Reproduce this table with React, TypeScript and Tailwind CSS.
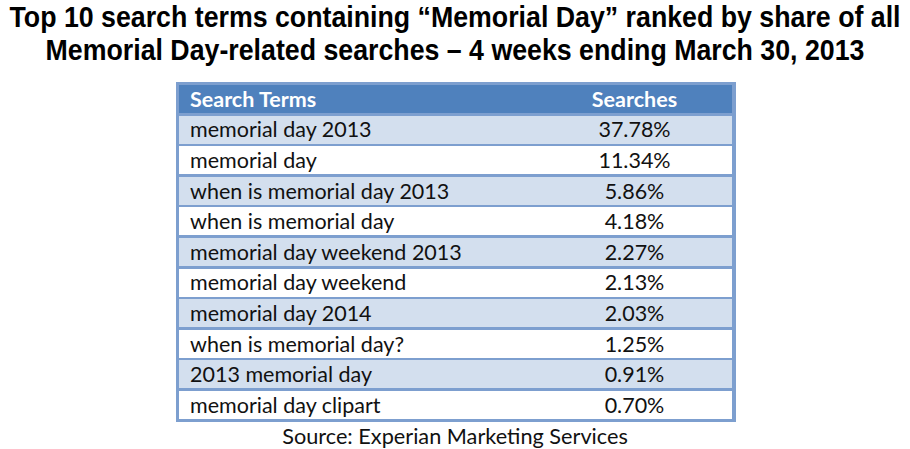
const rows: [string, string][] = [
  ['memorial day 2013', '37.78%'],
  ['memorial day', '11.34%'],
  ['when is memorial day 2013', '5.86%'],
  ['when is memorial day', '4.18%'],
  ['memorial day weekend 2013', '2.27%'],
  ['memorial day weekend', '2.13%'],
  ['memorial day 2014', '2.03%'],
  ['when is memorial day?', '1.25%'],
  ['2013 memorial day', '0.91%'],
  ['memorial day clipart', '0.70%'],
];

export default function App() {
  return (
    <div className="w-[910px] h-[449px] bg-white overflow-hidden flex flex-col items-center">
      {/* condensed bold title, squeezed horizontally since no narrow face is installed */}
      <h1 className="mt-[1px] w-[1000px] shrink-0 text-center text-[29px] leading-[33px] font-bold text-black font-['Liberation_Sans',sans-serif] whitespace-nowrap scale-x-[0.922]">
        <div>Top 10 search terms containing “Memorial Day” ranked by share of all</div>
        <div>Memorial Day-related searches – 4 weeks ending March 30, 2013</div>
      </h1>

      <div className="mt-[15px] ml-[2px] w-[560px] border-[3px] border-r-4 border-[#7d9fcf] bg-[#7d9fcf] font-['Lato',sans-serif] text-[21.5px] text-[#111]">
        <div className="flex h-[28px] items-center bg-[#4f81bd] text-white font-bold">
          <div className="w-[358px] pl-[11px]">Search Terms</div>
          <div className="flex-1 text-center">Searches</div>
        </div>
        {rows.map(([term, share], i) => (
          <div
            key={term}
            className={`mt-[2.6px] flex h-[28px] items-center ${i % 2 === 0 ? 'bg-[#d3dfee]' : 'bg-white'}`}
          >
            <div className="w-[358px] pl-[11px]">{term}</div>
            <div className="flex-1 text-center">{share}</div>
          </div>
        ))}
      </div>

      <p className="mt-[2px] text-[21.7px] leading-[24px] text-[#111] font-['Lato',sans-serif]">
        Source: Experian Marketing Services
      </p>
    </div>
  );
}
